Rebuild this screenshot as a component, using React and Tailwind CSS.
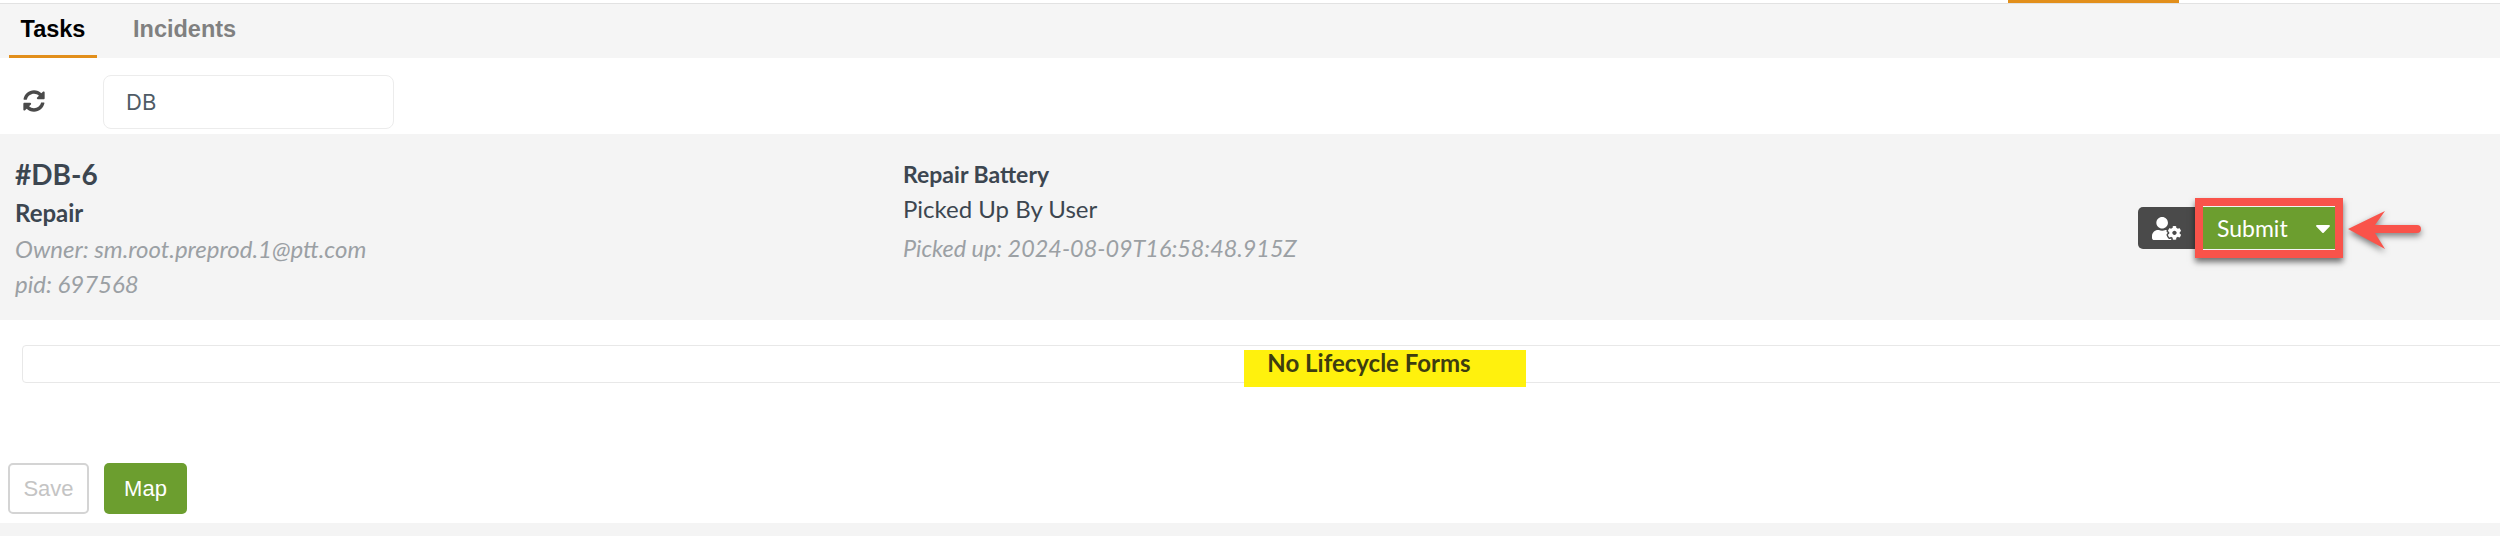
import React from "react";
import { FaSyncAlt, FaUserCog, FaCaretDown } from "react-icons/fa";

const proxima = "font-['Lato','Open_Sans',sans-serif]";

function Tabs() {
  return (
    <div className="flex h-[54px] bg-[#f5f5f5] px-[9px] font-['Liberation_Sans',sans-serif] text-[23.5px] font-bold">
      <div className="flex w-[88px] items-center justify-center border-b-[3px] border-[#e28f1b] text-black">
        Tasks
      </div>
      <div className="ml-[36px] flex items-center pb-[3px] text-[#808080]">Incidents</div>
    </div>
  );
}

function TaskCard() {
  return (
    <div className="flex h-[186px] items-start bg-[#f4f4f4] pl-[15px] pt-[23px] text-[#3c4650]">
      <div className="w-[888px]">
        <div className="text-[28px] font-bold leading-[34px]">#DB-6</div>
        <div className="mt-[7px] text-[24px] font-bold leading-[30px]">Repair</div>
        <div className="mt-[4px] text-[24px] italic leading-[34px] text-[#9ba0a4]">
          Owner: sm.root.preprod.1@ptt.com
        </div>
        <div className="text-[24px] italic leading-[36px] text-[#9ba0a4]">pid: 697568</div>
      </div>
      <div className="w-[1235px]">
        <div className="mt-[2px] text-[23px] font-bold leading-[30px]">Repair Battery</div>
        <div className="mt-[5px] text-[24px] leading-[30px]">Picked Up By User</div>
        <div className="mt-[7px] text-[23.4px] italic leading-[34px] text-[#9ba0a4]">
          Picked up: 2024-08-09T16:58:48.915Z
        </div>
      </div>
      <div className="mt-[50px] flex">
        <div className="flex h-[42px] w-[65px] items-center rounded-l-[5px] bg-[#4a4a4a] pl-[14px] text-[29px] text-white">
          <FaUserCog />
        </div>
        <div className="relative flex h-[42px] w-[132px] items-center bg-[#6c9e2f] pl-[14px] text-[23px] text-white">
          Submit
          <FaCaretDown className="ml-[23px] text-[24px]" />
          <div className="absolute -inset-y-[9px] -inset-x-[8px] border-[8px] border-[#f9534a] shadow-[0_4px_6px_rgba(0,0,0,0.55)]" />
          <svg
            className="absolute left-[144px] top-[4px] overflow-visible"
            width="76"
            height="40"
            viewBox="0 0 76 40"
          >
            <path
              d="M1 18 L38 0 L28 14 L70 14 Q74 14 74 18 Q74 22 70 22 L28 22 L38 38 Z"
              fill="#f9534a"
              className="drop-shadow-[0_3px_3px_rgba(0,0,0,0.5)]"
            />
          </svg>
        </div>
      </div>
    </div>
  );
}

export default function App() {
  return (
    <div className={`flex h-[536px] w-[2500px] flex-col overflow-hidden bg-white ${proxima}`}>
      <div className="h-[4px] border-b border-[#e2e2e2] pl-[2008px]">
        <div className="h-[3px] w-[171px] bg-[#e28f1b]" />
      </div>
      <Tabs />
      <div className="flex h-[76px] items-start pl-[23px] pt-[17px]">
        <FaSyncAlt className="mt-[15px] text-[22px] text-[#4a4a4a]" />
        <div className="ml-[58px] flex h-[54px] w-[291px] items-center rounded-[8px] border border-[#ececec] pl-[22px] font-['Inter',sans-serif] text-[22px] text-[#4f5b66]">
          DB
        </div>
      </div>
      <TaskCard />
      <div className="relative ml-[22px] mt-[25px] flex h-[38px] w-[2694px] shrink-0 items-center justify-center rounded-l-[4px] border border-[#e8e8e8]">
        <div className="absolute left-[1221px] top-[4px] h-[37px] w-[282px] bg-[#fff000]/95" />
        <span className="relative -mt-[2px] text-[24px] font-bold text-[#3d3d10]">No Lifecycle Forms</span>
      </div>
      <div className="mt-[80px] flex gap-[15px] pl-[8px] font-['Liberation_Sans',sans-serif] text-[22px]">
        <button className="h-[51px] w-[81px] rounded-[5px] border-2 border-[#d4d4d4] text-[#c4c4c4]">Save</button>
        <button className="h-[51px] w-[83px] rounded-[5px] bg-[#6c9e2f] text-white">Map</button>
      </div>
      <div className="mt-[9px] flex-1 bg-[#f4f4f4]" />
    </div>
  );
}
